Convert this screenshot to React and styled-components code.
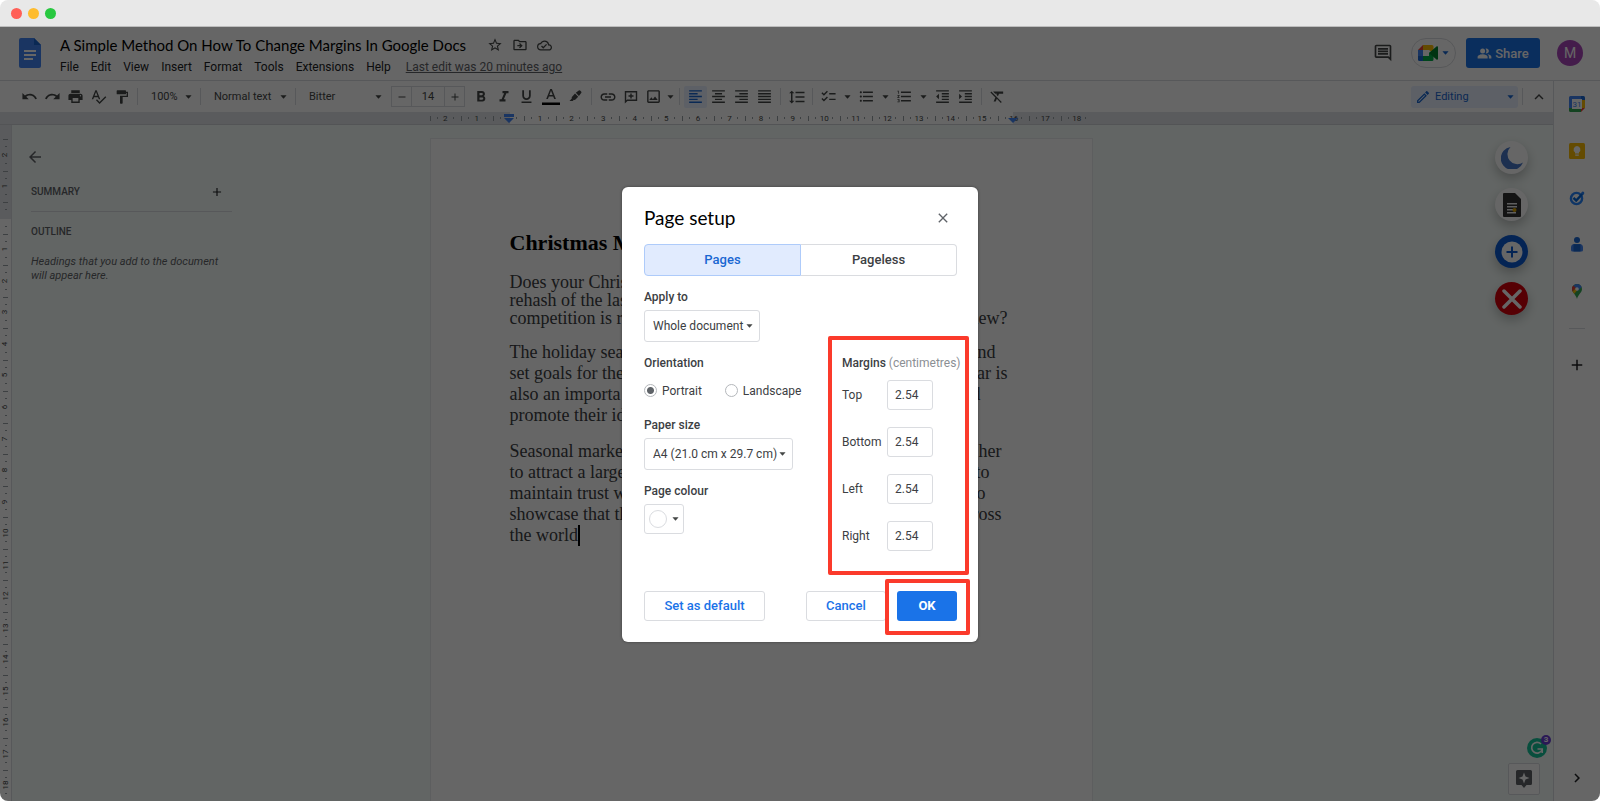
import React from "react";
import styled, { createGlobalStyle } from "styled-components";
import {
  MdUndo,
  MdRedo,
  MdPrint,
  MdSpellcheck,
  MdFormatPaint,
  MdAdd,
  MdRemove,
  MdFormatBold,
  MdFormatItalic,
  MdFormatUnderlined,
  MdLink,
  MdOutlineImage,
  MdFormatAlignLeft,
  MdFormatAlignCenter,
  MdFormatAlignRight,
  MdFormatAlignJustify,
  MdFormatLineSpacing,
  MdChecklist,
  MdFormatListBulleted,
  MdFormatListNumbered,
  MdFormatIndentDecrease,
  MdFormatIndentIncrease,
  MdFormatClear,
  MdOutlineEdit,
  MdExpandLess,
  MdChevronRight,
  MdStarBorder,
  MdOutlineDriveFileMove,
  MdOutlineCloudDone,
  MdOutlineComment,
  MdPeopleAlt,
  MdArrowBack,
  MdClose,
} from "react-icons/md";

const menus = ["File", "Edit", "View", "Insert", "Format", "Tools", "Extensions", "Help"];
const rulerUnits = [2, 1, 0, ...Array.from({ length: 18 }, (_, i) => i + 1)];

// each line: start, end, line width
const intro = [
  ["Does your Chris", "", 498],
  ["rehash of the las", "", 498],
  ["competition is r", "new?", 498],
];
const season = [
  ["The holiday sea", "nd", 486],
  ["set goals for the", "ar is", 498],
  ["also an importa", "d", 471],
  ["promote their id", "", 498],
];
const seasonal = [
  ["Seasonal marke", "her", 492],
  ["to attract a large", "to", 480],
  ["maintain trust w", "o", 476],
  ["showcase that th", "ross", 492],
];

const Caret = ({ color = "#444746" }) => (
  <CaretSvg viewBox="0 0 8 4" aria-hidden="true">
    <path d="M0.5 0h7L4 4z" fill={color} />
  </CaretSvg>
);

const DocsLogo = () => (
  <svg width="22" height="30" viewBox="0 0 22 30" aria-hidden="true">
    <path d="M2 0h13l7 7v21a2 2 0 0 1-2 2H2a2 2 0 0 1-2-2V2a2 2 0 0 1 2-2z" fill="#4285f4" />
    <path d="M15 0l7 7h-7z" fill="#1967d2" />
    <path d="M5 12h12v2H5zM5 16h12v2H5zM5 20h9v2H5z" fill="#fff" />
  </svg>
);

const MeetLogo = () => (
  <svg width="20" height="16" viewBox="0 0 20 16" aria-hidden="true">
    <path d="M0 5l5-5v5z" fill="#ea4335" />
    <path d="M5 0h9a1.500 1.500 0 0 1 1.500 1.500V8L11 5H5z" fill="#fbbc04" />
    <path d="M0 5h5v6H0z" fill="#4285f4" />
    <path d="M0 11h5v5H1.500A1.500 1.500 0 0 1 0 14.500z" fill="#1967d2" />
    <path d="M5 11h6V8l4.500-3v9.500A1.500 1.500 0 0 1 14 16H5z" fill="#00ac47" />
    <path d="M5 5h6v6H5z" fill="#fff" />
    <path d="M11 8l7.500-6.500c.6-.5 1.500-.1 1.500.7v11.600c0 .8-.9 1.200-1.500.7z" fill="#00832d" />
  </svg>
);

const CommentPlus = () => (
  <svg width="14" height="14" viewBox="0 0 14 14" fill="none" stroke="currentColor" strokeWidth="1.4" aria-hidden="true">
    <path d="M1.500 12V1.700h11v8.600H3.300z" />
    <path d="M7 3.500v5M4.500 6h5" />
  </svg>
);

const Highlighter = () => (
  <svg width="13" height="13" viewBox="0 0 13 13" fill="currentColor" aria-hidden="true">
    <path d="M6.800 2.700l3-2.200q.8-.5 1.600.3l.7.700q.7.800.1 1.600L9.900 6.100z" />
    <path d="M6 3.500L9.200 6.800 6.500 9.500q-.8.700-1.600.2L3.700 11H.500l2.300-2.600q-.4-.9.300-1.700z" />
  </svg>
);

const TextColor = () => (
  <svg width="18" height="18" viewBox="0 0 18 18" aria-hidden="true">
    <path d="M8.200 1h1.700l4 10h-1.700l-1-2.600H6.900L5.900 11H4.200zM7.400 7h3.300L9 2.700z" fill="#444746" />
    <path d="M0 14.500h18V17H0z" fill="#000" />
  </svg>
);

const Calendar = () => (
  <svg width="16" height="16" viewBox="0 0 16 16" aria-hidden="true">
    <path d="M0 1.500A1.500 1.500 0 0 1 1.500 0H12v4H4v8H0z" fill="#4285f4" />
    <path d="M12 0h2.500A1.500 1.500 0 0 1 16 1.500V4h-4z" fill="#1967d2" />
    <path d="M12 4h4v8h-4z" fill="#fbbc04" />
    <path d="M4 12h8v4H1.500A1.500 1.500 0 0 1 0 14.500V12z" fill="#34a853" />
    <path d="M12 12h4l-4 4z" fill="#ea4335" />
    <path d="M3 3h10v10H3z" fill="#fff" />
    <text x="8" y="11" fontSize="8" textAnchor="middle" fontFamily="Roboto, sans-serif" fill="#4285f4">31</text>
  </svg>
);

const Keep = () => (
  <svg width="16" height="16" viewBox="0 0 16 16" aria-hidden="true">
    <rect width="16" height="16" rx="1.500" fill="#fbbc04" />
    <path d="M8 3a3.500 3.500 0 0 0-2 6.300v1.200h4V9.300A3.500 3.500 0 0 0 8 3zM6.200 11.500h3.600v1.300H6.200z" fill="#fff" />
  </svg>
);

const Tasks = () => (
  <svg width="16" height="16" viewBox="0 0 16 16" fill="none" aria-hidden="true">
    <circle cx="7.500" cy="8.500" r="5.600" stroke="#2684fc" strokeWidth="2.400" />
    <path d="M4.500 7.800l2.700 2.700 7-7.500" stroke="#0066da" strokeWidth="2.400" />
    <circle cx="13.800" cy="3" r="1.500" fill="#2684fc" />
  </svg>
);

const Contacts = () => (
  <svg width="12" height="15" viewBox="0 0 12 15" aria-hidden="true">
    <circle cx="6" cy="3" r="3" fill="#1967d2" />
    <path d="M0 10.500A3.500 3.500 0 0 1 3.500 7h5a3.500 3.500 0 0 1 3.500 3.500V13a1.500 1.500 0 0 1-1.500 1.500h-9A1.500 1.500 0 0 1 0 13z" fill="#4285f4" />
    <path d="M2.500 7.200h7v7.300h-7z" fill="#1967d2" />
  </svg>
);

const Maps = () => (
  <svg width="10" height="15" viewBox="0 0 10 15" aria-hidden="true">
    <path d="M5 0a5 5 0 0 0-5 5c0 3.600 3.800 5.300 5 10 1.200-4.700 5-6.400 5-10a5 5 0 0 0-5-5z" fill="#34a853" />
    <path d="M5 0a5 5 0 0 1 4.600 3L5.700 7.200 1.300 1.700A5 5 0 0 1 5 0z" fill="#4285f4" />
    <path d="M1.300 1.600A5 5 0 0 0 .6 7.500L4 4z" fill="#ea4335" />
    <path d="M.6 7.500Q1 8.300 2.200 9.800L6 5.500 4 4z" fill="#fbbc04" />
    <circle cx="5" cy="5" r="1.800" fill="#fff" />
  </svg>
);

const Moon = () => (
  <svg width="22" height="22" viewBox="0 0 22 22" aria-hidden="true">
    <path d="M9.500 0A11.500 11.500 0 1 0 22 15.500 10 10 0 0 1 9.500 0z" fill="#4a78c8" />
  </svg>
);

const DarkDoc = () => (
  <svg width="18" height="24" viewBox="0 0 18 24" aria-hidden="true">
    <path d="M1 0h11l6 6v17a1 1 0 0 1-1 1H1a1 1 0 0 1-1-1V1a1 1 0 0 1 1-1z" fill="#333" />
    <path d="M4 10h10v1.500H4zM4 13h10v1.500H4zM4 16h7v1.500H4zM4 19h9v1.500H4z" fill="#eee" />
    <circle cx="11.500" cy="17" r="2" fill="#d9a400" />
  </svg>
);

const Grammarly = () => (
  <svg width="20" height="20" viewBox="0 0 20 20" fill="none" aria-hidden="true">
    <circle cx="10" cy="10" r="10" fill="#15c39a" />
    <path d="M14 6A5.400 5.400 0 1 0 15 12" stroke="#fff" strokeWidth="1.700" />
    <path d="M10.500 11h4.700v4" stroke="#fff" strokeWidth="1.700" />
  </svg>
);

const ExploreIcon = () => (
  <svg width="16" height="18" viewBox="0 0 16 18" aria-hidden="true">
    <path d="M1.500 0h13A1.500 1.500 0 0 1 16 1.500v12a1.500 1.500 0 0 1-1.500 1.500H10.500L8 18l-2.500-3h-4A1.500 1.500 0 0 1 0 13.500v-12A1.500 1.500 0 0 1 1.500 0z" fill="#5f6368" />
    <path d="M8 2.500l1.500 4 4 1.500-4 1.500-1.500 4-1.500-4-4-1.500 4-1.500z" fill="#fff" />
  </svg>
);

const MarginField = ({ name }) => (
  <MarginRow>
    <span>{name}</span>
    <MarginInput type="text" defaultValue="2.54" />
  </MarginRow>
);

const Lines = ({ lines }) =>
  lines.map(([start, end, width]) => (
    <Line key={start} $width={width}>
      <span>{start}</span>
      {end && <span>{end}</span>}
    </Line>
  ));

const PageSetup = () => (
  <Dialog role="dialog" aria-modal="true" aria-labelledby="page-setup-title">
    <DialogHeader>
      <h2 id="page-setup-title">Page setup</h2>
      <CloseButton aria-label="Close"><MdClose size={16} /></CloseButton>
    </DialogHeader>
    <Tabs>
      <Tab $active>Pages</Tab>
      <Tab>Pageless</Tab>
    </Tabs>
    <DialogBody>
      <Settings>
        <FieldLabel htmlFor="apply-to">Apply to</FieldLabel>
        <SelectBox $width={116}>
          <select id="apply-to"><option>Whole document</option></select>
          <Caret />
        </SelectBox>
        <Orientation>
          <legend>Orientation</legend>
          <RadioRow>
            <label><input type="radio" name="orientation" defaultChecked />Portrait</label>
            <label><input type="radio" name="orientation" />Landscape</label>
          </RadioRow>
        </Orientation>
        <FieldLabel htmlFor="paper-size">Paper size</FieldLabel>
        <SelectBox $width={149}>
          <select id="paper-size"><option>A4 (21.0 cm x 29.7 cm)</option></select>
          <Caret />
        </SelectBox>
        <FieldLabel as="span" id="page-colour">Page colour</FieldLabel>
        <ColourButton aria-labelledby="page-colour"><Swatch /><Caret /></ColourButton>
      </Settings>
      <Margins>
        <MarginsTitle><b>Margins</b> (centimetres)</MarginsTitle>
        <MarginField name="Top" />
        <MarginField name="Bottom" />
        <MarginField name="Left" />
        <MarginField name="Right" />
      </Margins>
    </DialogBody>
    <DialogFooter>
      <OutlineButton $width={121}>Set as default</OutlineButton>
      <Actions>
        <OutlineButton $width={80}>Cancel</OutlineButton>
        <Marked><OkButton>OK</OkButton></Marked>
      </Actions>
    </DialogFooter>
  </Dialog>
);

const Toolbar = () => (
  <ToolbarWrapper>
    <Tool aria-label="Undo"><MdUndo size={17} /></Tool>
    <Tool aria-label="Redo"><MdRedo size={17} /></Tool>
    <Tool aria-label="Print"><MdPrint size={17} /></Tool>
    <Tool aria-label="Spelling"><MdSpellcheck size={17} /></Tool>
    <Tool aria-label="Paint format"><MdFormatPaint size={16} /></Tool>
    <Divider />
    <Drop $width={54}><select aria-label="Zoom"><option>100%</option></select><Caret /></Drop>
    <Divider />
    <Drop $width={86}><select aria-label="Styles"><option>Normal text</option></select><Caret /></Drop>
    <Divider />
    <Drop $width={86}><select aria-label="Font"><option>Bitter</option></select><Caret /></Drop>
    <FontSize>
      <button aria-label="Decrease font size"><MdRemove size={12} /></button>
      <input aria-label="Font size" defaultValue="14" />
      <button aria-label="Increase font size"><MdAdd size={12} /></button>
    </FontSize>
    <Tool aria-label="Bold"><MdFormatBold size={18} /></Tool>
    <Tool aria-label="Italic"><MdFormatItalic size={18} /></Tool>
    <Tool aria-label="Underline"><MdFormatUnderlined size={17} /></Tool>
    <Tool $wide aria-label="Text colour"><TextColor /></Tool>
    <Tool aria-label="Highlight colour"><Highlighter /></Tool>
    <Divider />
    <Tool aria-label="Insert link"><MdLink size={18} /></Tool>
    <Tool aria-label="Add comment"><CommentPlus /></Tool>
    <Tool aria-label="Insert image"><MdOutlineImage size={17} /></Tool>
    <CaretTool $narrow aria-label="Image options"><Caret /></CaretTool>
    <Divider />
    <Tool $active aria-label="Left align"><MdFormatAlignLeft size={17} /></Tool>
    <Tool aria-label="Centre align"><MdFormatAlignCenter size={17} /></Tool>
    <Tool aria-label="Right align"><MdFormatAlignRight size={17} /></Tool>
    <Tool aria-label="Justify"><MdFormatAlignJustify size={17} /></Tool>
    <Divider />
    <Tool aria-label="Line spacing"><MdFormatLineSpacing size={18} /></Tool>
    <Divider />
    <Tool aria-label="Checklist"><MdChecklist size={17} /></Tool>
    <CaretTool aria-label="Checklist options"><Caret /></CaretTool>
    <Tool aria-label="Bulleted list"><MdFormatListBulleted size={17} /></Tool>
    <CaretTool aria-label="Bullet options"><Caret /></CaretTool>
    <Tool aria-label="Numbered list"><MdFormatListNumbered size={17} /></Tool>
    <CaretTool aria-label="Number options"><Caret /></CaretTool>
    <Tool aria-label="Decrease indent"><MdFormatIndentDecrease size={17} /></Tool>
    <Tool aria-label="Increase indent"><MdFormatIndentIncrease size={17} /></Tool>
    <Divider />
    <Tool aria-label="Clear formatting"><MdFormatClear size={17} /></Tool>
    <Mode>
      <MdOutlineEdit size={16} />
      <select aria-label="Mode"><option>Editing</option></select>
      <Caret color="#1967d2" />
    </Mode>
    <Divider />
    <Tool aria-label="Hide the menus"><MdExpandLess size={18} /></Tool>
  </ToolbarWrapper>
);

const App = () => (
  <Window>
    <GlobalStyle />
    <TitleBar>
      <Dot $color="#ff5f57" />
      <Dot $color="#febc2e" />
      <Dot $color="#28c840" />
    </TitleBar>
    <Screen>
      <Header>
        <DocsLogo />
        <Titles>
          <TitleRow>
            <h1>A Simple Method On How To Change Margins In Google Docs</h1>
            <MdStarBorder size={16} />
            <MdOutlineDriveFileMove size={16} />
            <MdOutlineCloudDone size={15} />
          </TitleRow>
          <MenuRow>
            {menus.map((menu) => <button key={menu}>{menu}</button>)}
            <a href="#history">Last edit was 20 minutes ago</a>
          </MenuRow>
        </Titles>
        <HeaderRight>
          <IconButton aria-label="Comments"><MdOutlineComment size={20} /></IconButton>
          <MeetButton aria-label="Meet"><MeetLogo /><Caret color="#1967d2" /></MeetButton>
          <ShareButton><MdPeopleAlt size={15} />Share</ShareButton>
          <Avatar>M</Avatar>
        </HeaderRight>
      </Header>
      <Workspace>
        <Editor>
          <Toolbar />
          <HRuler>
            <HScale>
              {rulerUnits.map((n, i) => (
                <HUnit key={i}><i /><span>{n || ""}</span><i /></HUnit>
              ))}
              <StartMarker viewBox="0 0 10 9" aria-hidden="true"><path d="M0 0h10v3H0zM0 4h10L5 9z" /></StartMarker>
              <EndMarker viewBox="0 0 10 9" aria-hidden="true"><path d="M0 4h10L5 9z" /></EndMarker>
            </HScale>
          </HRuler>
          <Canvas>
            <VRuler>
              {rulerUnits.map((n, i) => (
                <VUnit key={i}><i /><span>{n || ""}</span><i /></VUnit>
              ))}
            </VRuler>
            <Outline>
              <BackButton aria-label="Close outline"><MdArrowBack size={18} /></BackButton>
              <SummaryRow>
                <h3>SUMMARY</h3>
                <button aria-label="Add summary"><MdAdd size={14} /></button>
              </SummaryRow>
              <h3>OUTLINE</h3>
              <p>Headings that you add to the document will appear here.</p>
            </Outline>
            <PageArea>
              <Page>
                <h2>Christmas M</h2>
                <Paragraph $tight><Lines lines={intro} /></Paragraph>
                <Paragraph><Lines lines={season} /></Paragraph>
                <Paragraph>
                  <Lines lines={seasonal} />
                  <LastLine>the world</LastLine>
                </Paragraph>
              </Page>
            </PageArea>
            <Floating>
              <Round $color="#fff"><Moon /></Round>
              <Round $color="#fff"><DarkDoc /></Round>
              <Round $color="#0b5bd3">
                <svg width="22" height="22" viewBox="0 0 22 22" aria-hidden="true">
                  <circle cx="11" cy="11" r="10.500" fill="#fff" />
                  <path d="M11 5.500v11M5.500 11h11" stroke="#0b5bd3" strokeWidth="2" />
                </svg>
              </Round>
              <Round $color="#d8000c">
                <svg width="20" height="20" viewBox="0 0 20 20" aria-hidden="true">
                  <path d="M2 2l16 16M18 2L2 18" stroke="#fff" strokeWidth="3.500" strokeLinecap="round" />
                </svg>
              </Round>
            </Floating>
            <Corner>
              <GrammarlyButton aria-label="Grammarly"><Grammarly /><Badge>3</Badge></GrammarlyButton>
              <Explore aria-label="Explore"><ExploreIcon /></Explore>
            </Corner>
          </Canvas>
        </Editor>
        <SideRail>
          <RailButton aria-label="Calendar"><Calendar /></RailButton>
          <RailButton aria-label="Keep"><Keep /></RailButton>
          <RailButton aria-label="Tasks"><Tasks /></RailButton>
          <RailButton aria-label="Contacts"><Contacts /></RailButton>
          <RailButton aria-label="Maps"><Maps /></RailButton>
          <RailLine />
          <RailButton aria-label="Get add-ons"><MdAdd size={18} /></RailButton>
          <RailToggle aria-label="Hide side panel"><MdChevronRight size={18} /></RailToggle>
        </SideRail>
      </Workspace>
      <Backdrop>
        <PageSetup />
      </Backdrop>
    </Screen>
  </Window>
);

const GlobalStyle = createGlobalStyle`
  * { box-sizing: border-box; }
  body {
    margin: 0;
    background: #fff;
    color: #202124;
    font-family: Roboto, "Liberation Sans", sans-serif;
    font-size: 12px;
  }
  h1, h2, h3, p { margin: 0; }
  svg { flex: none; display: block; }
  button, input, select { font: inherit; color: inherit; margin: 0; }
  button {
    padding: 0;
    border: 0;
    background: none;
    display: flex;
    align-items: center;
    justify-content: center;
  }
  select {
    appearance: none;
    border: 0;
    padding: 0;
    background: none;
    flex: 1;
    min-width: 0;
  }
`;

const Window = styled.div`
  height: 100vh;
  min-height: 720px;
  display: flex;
  flex-direction: column;
  border-radius: 8px;
  overflow: hidden;
`;

const TitleBar = styled.div`
  height: 27px;
  flex: none;
  display: flex;
  align-items: center;
  gap: 6px;
  padding: 1px 11px 0;
  background: #e8e8e8;
  border-bottom: 1px solid #bdbdbd;
`;

const Dot = styled.span`
  width: 11px;
  height: 11px;
  border-radius: 50%;
  background: ${(p) => p.$color};
`;

const Screen = styled.div`
  position: relative;
  flex: 1;
  min-height: 0;
  display: flex;
  flex-direction: column;
  background: #fff;
`;

const Header = styled.header`
  height: 54px;
  flex: none;
  display: flex;
  align-items: center;
  gap: 19px;
  padding: 0 17px 1px 19px;
  border-bottom: 1px solid #dadce0;
`;

const Titles = styled.div`
  flex: 1;
  padding-top: 4px;
`;

const TitleRow = styled.div`
  display: flex;
  align-items: center;
  gap: 9px;
  height: 24px;
  color: #444746;

  h1 {
    margin-right: 12px;
    font: 400 15px/24px Lato, "Open Sans", sans-serif;
    color: #000;
  }
`;

const MenuRow = styled.nav`
  display: flex;
  align-items: center;
  gap: 12px;
  height: 20px;
  font-size: 12px;

  a {
    margin-left: 3px;
    color: #5f6368;
  }
`;

const HeaderRight = styled.div`
  display: flex;
  align-items: center;
`;

const IconButton = styled.button`
  margin-right: 18px;
  color: #444746;
`;

const MeetButton = styled.button`
  width: 45px;
  height: 30px;
  gap: 4px;
  margin-right: 10px;
  border: 1px solid #dadce0;
  border-radius: 15px;
`;

const ShareButton = styled.button`
  width: 74px;
  height: 30px;
  gap: 3px;
  margin-right: 17px;
  border-radius: 3px;
  background: #1a73e8;
  color: #fff;
  font-size: 13px;
  font-weight: 500;
`;

const Avatar = styled.button`
  width: 26px;
  height: 26px;
  border-radius: 50%;
  background: #ab47bc;
  color: #fff;
  font-size: 14px;
`;

const Workspace = styled.div`
  flex: 1;
  min-height: 0;
  display: flex;
`;

const Editor = styled.main`
  flex: 1;
  min-width: 0;
  display: flex;
  flex-direction: column;
`;

const ToolbarWrapper = styled.div`
  height: 31px;
  flex: none;
  display: flex;
  align-items: center;
  padding: 0 3px 0 18px;
  font-size: 11px;
  color: #444746;
`;

const Tool = styled.button`
  width: ${(p) => (p.$wide ? 26 : 23)}px;
  height: 22px;
  flex: none;
  border-radius: 2px;
  background: ${(p) => (p.$active ? "#e8f0fe" : "none")};
  color: ${(p) => (p.$active ? "#1967d2" : "inherit")};
`;

const CaretTool = styled.button`
  width: ${(p) => (p.$narrow ? 10 : 15)}px;
  height: 22px;
  flex: none;
`;

const CaretSvg = styled.svg`
  width: 7px;
  height: 4px;
`;

const Divider = styled.span`
  width: 1px;
  height: 17px;
  flex: none;
  margin: 0 4px;
  background: #dadce0;
`;

const Drop = styled.span`
  width: ${(p) => p.$width}px;
  flex: none;
  display: flex;
  align-items: center;
  padding: 0 4px 0 9px;
`;

const FontSize = styled.span`
  height: 21px;
  flex: none;
  display: flex;
  margin: 0 4px 0 5px;
  border: 1px solid #dadce0;

  button {
    width: 19px;
  }
  input {
    width: 34px;
    padding: 0;
    border: solid #dadce0;
    border-width: 0 1px;
    background: none;
    text-align: center;
  }
`;

const Mode = styled.span`
  width: 107px;
  height: 22px;
  display: flex;
  align-items: center;
  gap: 4px;
  margin-left: auto;
  padding: 0 4px;
  border-radius: 3px;
  background: #e8f0fe;
  color: #1967d2;
`;

const HRuler = styled.div`
  height: 13px;
  flex: none;
  display: flex;
  justify-content: center;
  padding-right: 31px;
  background: #e1e4e8;
  border-bottom: 1px solid #cfd3d8;
`;

const HScale = styled.div`
  position: relative;
  width: 663px;
  display: flex;
  align-items: center;
  background: linear-gradient(to right, transparent 12%, #fff 12%, #fff 88%, transparent 88%);
`;

const HUnit = styled.div`
  flex: 1;
  height: 5px;
  display: flex;
  align-items: center;
  justify-content: space-between;
  padding: 0 7px 0 6px;
  border-left: 1px solid #9aa0a6;
  color: #444746;
  font-size: 8px;

  i {
    width: 1px;
    height: 2px;
    background: #9aa0a6;
  }
`;

const StartMarker = styled.svg`
  position: absolute;
  top: 2px;
  left: 12%;
  width: 10px;
  height: 9px;
  margin-left: -5px;
  fill: #4285f4;
`;

const EndMarker = styled(StartMarker)`
  left: 88%;
`;

const Canvas = styled.div`
  position: relative;
  flex: 1;
  min-height: 0;
  display: flex;
  background: #f6fdfa;
`;

const VRuler = styled.div`
  width: 12px;
  flex: none;
  display: flex;
  flex-direction: column;
  align-items: center;
  padding-top: 14px;
  background: linear-gradient(to bottom, #e1e4e8 94px, #fff 94px);
  border-right: 1px solid #dadce0;
`;

const VUnit = styled.div`
  flex: 1;
  width: 5px;
  display: flex;
  flex-direction: column;
  align-items: center;
  justify-content: space-between;
  padding: 6px 0 7px;
  border-top: 1px solid #9aa0a6;
  color: #444746;
  font-size: 8px;
  line-height: 8px;

  span {
    height: 8px;
    transform: rotate(-90deg);
  }
  i {
    width: 2px;
    height: 1px;
    background: #9aa0a6;
  }
`;

const Outline = styled.aside`
  width: 220px;
  flex: none;
  padding: 23px 0 0 19px;
  color: #5f6368;

  h3 {
    font-size: 10px;
    font-weight: 500;
    line-height: 14px;
  }
  p {
    margin-top: 16px;
    font-size: 11px;
    font-style: italic;
    line-height: 14px;
  }
`;

const BackButton = styled.button`
  margin-left: -5px;
`;

const SummaryRow = styled.div`
  display: flex;
  align-items: center;
  justify-content: space-between;
  margin: 19px 0 13px;
  padding: 0 8px 12px 0;
  border-bottom: 1px solid #dadce0;

  button {
    color: #202124;
  }
`;

const PageArea = styled.div`
  flex: 1;
  display: flex;
  justify-content: center;
  padding: 13px 263px 0 0;
`;

const Page = styled.article`
  width: 663px;
  padding: 91px 79px 0;
  background: #fff;
  border: 1px solid #e8eaed;
  border-bottom: 0;
  color: #3c4043;
  font-family: "Liberation Serif", serif;

  h2 {
    margin-bottom: 17px;
    font-size: 22px;
    line-height: 26px;
    color: #000;
  }
`;

const Paragraph = styled.div`
  margin-bottom: 15px;
  font-size: 18px;
  line-height: ${(p) => (p.$tight ? 18 : 21)}px;
  white-space: nowrap;
`;

const Line = styled.div`
  width: ${(p) => p.$width}px;
  display: flex;
  justify-content: space-between;
`;

const LastLine = styled.div`
  width: max-content;
  border-right: 2px solid #000;
`;

const Floating = styled.div`
  position: absolute;
  top: 16px;
  right: 25px;
  display: flex;
  flex-direction: column;
  gap: 14px;
`;

const Round = styled.button`
  width: 33px;
  height: 33px;
  border-radius: 50%;
  background: ${(p) => p.$color};
  box-shadow: 0 5px 12px rgba(0, 0, 0, 0.25);
`;

const Corner = styled.div`
  position: absolute;
  right: 6px;
  bottom: 6px;
  display: flex;
  flex-direction: column;
  align-items: flex-end;
  gap: 5px;
`;

const GrammarlyButton = styled.button`
  position: relative;
`;

const Badge = styled.span`
  position: absolute;
  top: -3px;
  right: -4px;
  width: 10px;
  height: 10px;
  border-radius: 50%;
  background: #6a3fd6;
  color: #fff;
  font-size: 8px;
  font-weight: 700;
  line-height: 10px;
`;

const Explore = styled.button`
  width: 32px;
  height: 32px;
  margin-right: 7px;
  border: 1px solid #dadce0;
  border-radius: 2px;
  background: #fff;
`;

const SideRail = styled.aside`
  width: 47px;
  flex: none;
  display: flex;
  flex-direction: column;
  align-items: center;
  border-left: 1px solid #dadce0;
`;

const RailButton = styled.button`
  width: 46px;
  height: 47px;
  padding-bottom: 2px;
`;

const RailLine = styled.span`
  width: 16px;
  height: 1px;
  margin: 12px 0 13px;
  background: #dadce0;
`;

const RailToggle = styled.button`
  height: 46px;
  margin-top: auto;
`;

const Backdrop = styled.div`
  position: absolute;
  inset: 0;
  display: flex;
  align-items: center;
  justify-content: center;
  background: rgba(0, 0, 0, 0.6);
`;

const Dialog = styled.section`
  width: 356px;
  padding: 19px 21px 21px 22px;
  border-radius: 6px;
  background: #fff;
  color: #3c4043;
  box-shadow: 0 0 3px rgba(0, 0, 0, 0.4);
`;

const DialogHeader = styled.div`
  display: flex;
  align-items: center;
  justify-content: space-between;
  margin-bottom: 14px;

  h2 {
    font: 400 19px/24px Lato, "Open Sans", sans-serif;
    color: #000;
  }
`;

const CloseButton = styled.button`
  margin-right: 6px;
  color: #5f6368;
`;

const Tabs = styled.div`
  display: flex;
`;

const Tab = styled.button`
  flex: 1;
  height: 32px;
  border: 1px solid ${(p) => (p.$active ? "#aecbfa" : "#dadce0")};
  border-left-width: ${(p) => (p.$active ? 1 : 0)}px;
  border-radius: ${(p) => (p.$active ? "4px 0 0 4px" : "0 4px 4px 0")};
  background: ${(p) => (p.$active ? "#e1ebfe" : "#fff")};
  color: ${(p) => (p.$active ? "#1967d2" : "#3c4043")};
  font-size: 13px;
  font-weight: 500;
`;

const DialogBody = styled.div`
  display: flex;
  justify-content: space-between;
  padding-top: 13px;
`;

const Settings = styled.div`
  display: flex;
  flex-direction: column;
  align-items: flex-start;
`;

const FieldLabel = styled.label`
  margin-bottom: 5px;
  font-weight: 500;
  line-height: 16px;
`;

const SelectBox = styled.div`
  width: ${(p) => p.$width}px;
  height: 32px;
  display: flex;
  align-items: center;
  margin-bottom: 13px;
  padding: 0 6px 0 8px;
  border: 1px solid #dadce0;
  border-radius: 3px;
`;

const Orientation = styled.fieldset`
  margin: 0 0 18px;
  padding: 0;
  border: 0;

  legend {
    padding: 0;
    font-weight: 500;
    line-height: 16px;
  }
`;

const RadioRow = styled.div`
  display: flex;
  gap: 23px;
  padding-top: 12px;

  label {
    display: flex;
    align-items: center;
    gap: 5px;
    line-height: 16px;
  }
  input {
    appearance: none;
    width: 13px;
    height: 13px;
    border: 1px solid #b4b7bb;
    border-radius: 50%;
    background: #fff;
  }
  input:checked {
    background: radial-gradient(#5f6368 3px, #fff 4px);
  }
`;

const ColourButton = styled.button`
  width: 40px;
  height: 30px;
  gap: 5px;
  border: 1px solid #dadce0;
  border-radius: 3px;
`;

const Swatch = styled.span`
  width: 18px;
  height: 18px;
  border: 1px solid #dadce0;
  border-radius: 50%;
`;

const Margins = styled.div`
  position: relative;
  width: 115px;
  display: flex;
  flex-direction: column;
  gap: 17px;
  margin-top: 66px;

  &::after {
    content: "";
    position: absolute;
    inset: -19px -12px -24px -14px;
    border: 4px solid #fb3a2b;
    border-radius: 2px;
    pointer-events: none;
  }
`;

const MarginsTitle = styled.div`
  height: 8px;
  line-height: 16px;
  white-space: nowrap;
  color: #8b8f94;

  b {
    color: #3c4043;
    font-weight: 500;
  }
`;

const MarginRow = styled.label`
  display: flex;
  align-items: center;

  span {
    width: 45px;
  }
`;

const MarginInput = styled.input`
  width: 46px;
  height: 30px;
  padding: 0 7px;
  border: 1px solid #dadce0;
  border-radius: 3px;
`;

const DialogFooter = styled.div`
  display: flex;
  justify-content: space-between;
  margin-top: 40px;
`;

const Actions = styled.div`
  display: flex;
  gap: 11px;
`;

const OutlineButton = styled.button`
  width: ${(p) => p.$width}px;
  height: 30px;
  border: 1px solid #dadce0;
  border-radius: 3px;
  color: #1a73e8;
  font-size: 13px;
  font-weight: 500;
`;

const Marked = styled.span`
  position: relative;

  &::after {
    content: "";
    position: absolute;
    inset: -12px -13px -14px -12px;
    border: 4px solid #fb3a2b;
    border-radius: 2px;
    pointer-events: none;
  }
`;

const OkButton = styled(OutlineButton)`
  width: 60px;
  border: 0;
  background: #1a73e8;
  color: #fff;
  font-weight: 700;
`;

export default App;
